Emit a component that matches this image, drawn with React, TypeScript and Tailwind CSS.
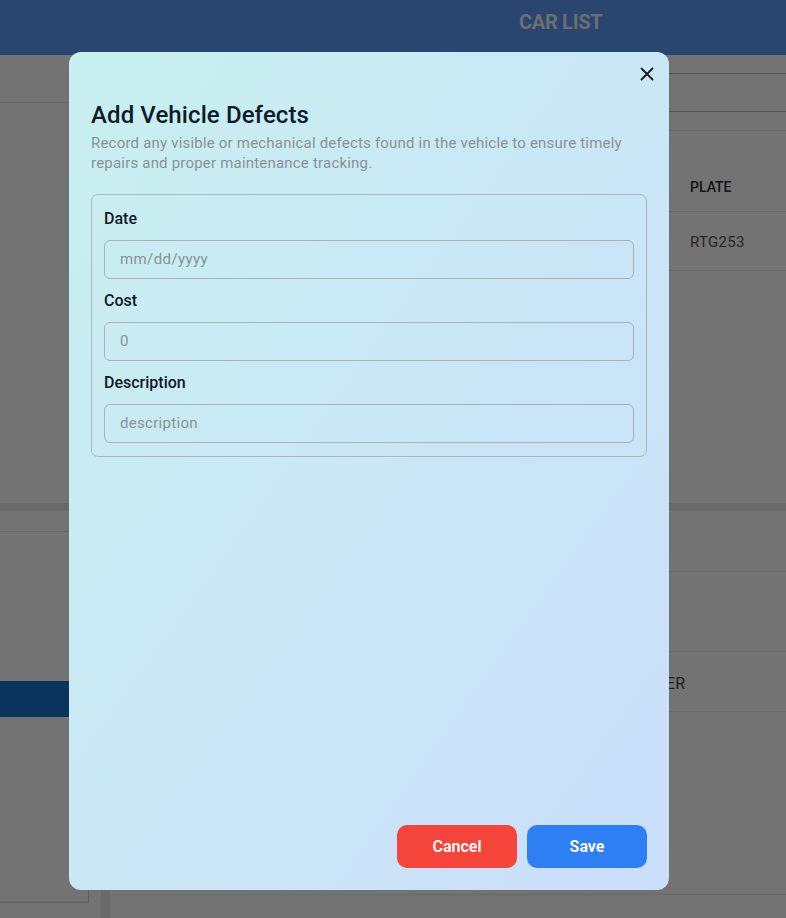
import React from "react";

export default function App() {
  return (
    <div className="relative h-[918px] w-[786px] overflow-hidden bg-[#737373] font-['Roboto',sans-serif]">
      {/* Background page (dimmed by overlay) */}
      <header className="flex h-[55px] items-start bg-[#284670] pl-[519px] pt-[10px]">
        <span className="text-[20px] font-bold leading-[24px] tracking-[-0.3px] text-[#6e6e6e]">CAR LIST</span>
      </header>

      {/* Section 1 */}
      <div className="flex h-[448px]">
        <div className="w-[101px] shrink-0">
          <div className="h-[48px] border-b border-[#6a6a6a]" />
        </div>
        <div className="flex-1">
          <div className="h-[18px]" />
          <div className="h-[39px] border-t border-b border-[#555555]" />
          <div className="h-[19px] border-b border-[#686868]" />
          <div className="flex h-[81px] items-end justify-end border-b border-[#686868] pb-[13px]">
            <span className="w-[96px] text-[14px] font-medium text-[#141414]">PLATE</span>
          </div>
          <div className="flex h-[59px] items-center justify-end border-b border-[#686868] pt-[2px]">
            <span className="w-[96px] text-[15px] tracking-[0.3px] text-[#262626]">RTG253</span>
          </div>
        </div>
      </div>

      {/* Band */}
      <div className="h-[8px] bg-[#6a6a6a]" />

      {/* Section 2 */}
      <div className="flex h-[407px]">
        <div className="w-[101px] shrink-0">
          <div className="h-[21px] border-b border-[#686868]" />
          <div className="h-[149px]" />
          <div className="h-[36px] bg-[#0b335d]" />
          <div className="h-[186px] w-[89px] border-r border-b border-[#5e5e5e]" />
        </div>
        <div className="flex w-[9px] shrink-0 flex-col">
          <div className="h-[379px]" />
          <div className="flex-1 bg-[#6a6a6a]" />
        </div>
        <div className="flex-1">
          <div className="h-[61px] border-b border-[#6a6a6a]" />
          <div className="h-[80px] border-b border-[#6a6a6a]" />
          <div className="flex h-[60px] items-center justify-end border-b border-[#6a6a6a] pr-[101px] pt-[5px]">
            <span className="text-[16px] text-[#1e1e1e]">DRIVER</span>
          </div>
          <div className="h-[183px] border-b border-[#6a6a6a]" />
        </div>
      </div>

      {/* Modal */}
      <div className="absolute left-[69px] top-[52px] flex h-[838px] w-[600px] flex-col rounded-[12px] bg-linear-to-br from-[#c8f0ef] to-[#cadefb] px-[22px] pb-[22px] pt-[48px]">
        <button className="absolute right-[14px] top-[14px] flex h-[16px] w-[16px] items-center justify-center text-[#1a1a1a]">
          <svg width="14" height="14" viewBox="0 0 14 14" fill="none" stroke="currentColor" strokeWidth="1.8" strokeLinecap="round">
            <path d="M1.5 1.5 L12.5 12.5 M12.5 1.5 L1.5 12.5" />
          </svg>
        </button>

        <h2 className="text-[24px] font-medium leading-[30px] tracking-[0.1px] text-[#0f1a2b]">Add Vehicle Defects</h2>
        <p className="mt-[3px] text-[15px] leading-[20px] tracking-[0.2px] text-[#8a9196]">
          Record any visible or mechanical defects found in the vehicle to ensure timely repairs and proper maintenance tracking.
        </p>

        <div className="mt-[21px] rounded-[7px] border border-[#a9b8bf] px-[12px] pb-[13px] pt-[13px]">
          <label className="block text-[16px] font-medium leading-[22px] text-[#111827]">Date</label>
          <input
            type="text"
            placeholder="mm/dd/yyyy"
            className="mt-[10px] block h-[39px] w-full rounded-[6px] border border-[#a9b2b7] bg-transparent px-[15px] pb-[2px] text-[15px] tracking-[0.4px] text-[#333] placeholder:text-[#8b9094] outline-none"
          />
          <label className="mt-[11px] block text-[16px] font-medium leading-[22px] text-[#111827]">Cost</label>
          <input
            type="text"
            placeholder="0"
            className="mt-[10px] block h-[39px] w-full rounded-[6px] border border-[#a9b2b7] bg-transparent px-[15px] pb-[2px] text-[15px] text-[#333] placeholder:text-[#8b9094] outline-none"
          />
          <label className="mt-[11px] block text-[16px] font-medium leading-[22px] text-[#111827]">Description</label>
          <input
            type="text"
            placeholder="description"
            className="mt-[10px] block h-[39px] w-full rounded-[6px] border border-[#a9b2b7] bg-transparent px-[15px] pb-[2px] text-[15px] tracking-[0.3px] text-[#333] placeholder:text-[#8b9094] outline-none"
          />
        </div>

        <div className="mt-auto flex justify-end gap-[10px]">
          <button className="h-[43px] w-[120px] rounded-[10px] bg-[#f5443a] text-[16px] font-semibold text-white">
            Cancel
          </button>
          <button className="h-[43px] w-[120px] rounded-[10px] bg-[#2f7ff4] text-[16px] font-semibold text-white">
            Save
          </button>
        </div>
      </div>
    </div>
  );
}
